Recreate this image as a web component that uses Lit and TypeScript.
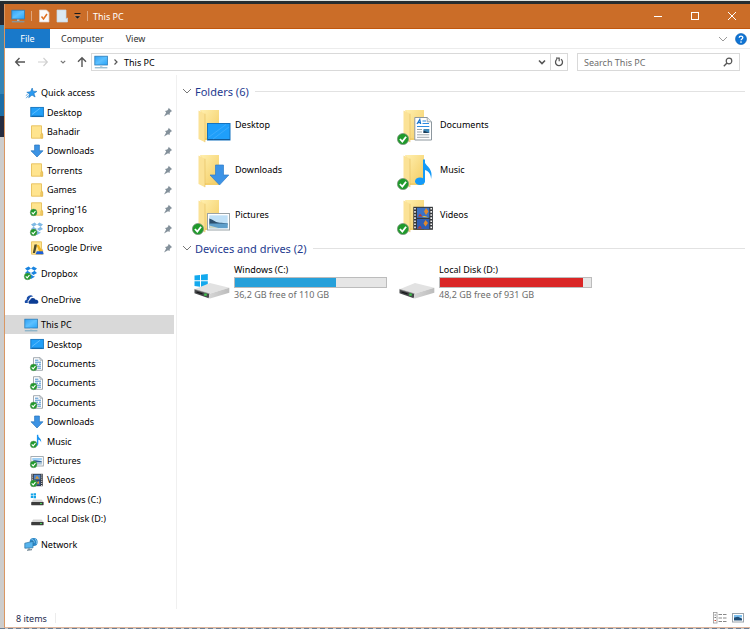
import { LitElement, html, svg, css, nothing } from "lit";
import { customElement, property } from "lit/decorators.js";

const badge = (cx: number, cy: number, r: number) => svg`
  <circle cx=${cx} cy=${cy} r=${r} fill="#1f9a2b" stroke="#7b8f7b" stroke-width=${r > 4 ? 0.7 : 0.4}></circle>
  <path d="M${cx - r * 0.55} ${cy}L${cx - r * 0.12} ${cy + r * 0.45}L${cx + r * 0.55} ${cy - r * 0.4}" fill="none" stroke="#fff" stroke-width=${r * 0.32}></path>`;

const smallBadge = badge(3.6, 10.4, 3.4);

const gradients = svg`<defs>
  <linearGradient id="sky" x1="0" y1="0" x2="1" y2="1"><stop offset="0" stop-color="#2ea0f5"/><stop offset=".5" stop-color="#5cc0ff"/><stop offset="1" stop-color="#28a4f8"/></linearGradient>
  <linearGradient id="flap" x1="0" y1="0" x2="1" y2="1"><stop offset="0" stop-color="#ffefae"/><stop offset="1" stop-color="#f3cc62"/></linearGradient>
  <linearGradient id="metal" x1="0" y1="0" x2="1" y2="0"><stop offset="0" stop-color="#d6d6d6"/><stop offset="1" stop-color="#bcbcbc"/></linearGradient>
</defs>`;

const smallFolder = svg`
  <path d="M1.5.8h10v9.700l1.200-1.300v4H1.500z" fill="#ffe48e" stroke="#e6c05a" stroke-width=".9"/>
  <path d="M10.800 13V9.300l1.600-1.100v5z" fill="#f6d06c" stroke="#dfb64c" stroke-width=".6"/>`;

const smallDrive = svg`
  <path d="M3.200 7.600h8.400l2 2.600H1.200z" fill="#d3d3d3"/>
  <rect x="1.200" y="10" width="12.400" height="3.200" rx=".4" fill="#3c3c3c"/>
  <rect x="10" y="11" width="2" height="1.100" fill="#49d35a"/>`;

const dropbox = (fill: string) => svg`
  <g fill=${fill}><path d="M1 2.600 4.600.6 7 2.600 3.400 4.800zM13 2.600 9.400.6 7 2.600l3.600 2.200zM1 7l2.400-2.200L7 7 4.600 9zM13 7l-2.400-2.200L7 7l2.400 2zM3.600 9.800l1 .5L7 8.200l2.400 2.100 1-.5v1.200L7 13l-3.400-2z"/></g>`;

const smallPage = svg`
  <path d="M3.500.7h6.600l2.400 2.400v10.200h-9z" fill="#fff" stroke="#8a949c" stroke-width=".8"/>
  <path d="M10 .7v2.500h2.500" fill="none" stroke="#8a949c" stroke-width=".7"/>
  <path d="M5 3.200h3.400M5 5.200h6M5 7.200h3M9 7.200h2M6 9.200h5M7.500 11.200h3.500" stroke="#2f7fc4" stroke-width=".9"/>`;

const monitor = svg`
  <rect x=".8" y="1.200" width="12.600" height="8.800" fill="url(#sky)" stroke="#2b7cb8" stroke-width=".8"/>
  <path d="M6 10.600h2.400v1.200H6z" fill="#b9c9d3"/><path d="M.8 12.800h12.600" stroke="#6fa5c2" stroke-width="1"/>`;

const small: Record<string, unknown> = {
  star: svg`<path d="M8.200 2 9 5.200l3.900.2-3 2 1.200 3.600-3.100-1.900-3.300 2.600.8-3.800L2.800 6.300l3.700-.6z" fill="#2b9af0" stroke="#1670bd" stroke-width=".6"/><path d="M2.200 12.200l2.300-2.800M1.800 9.600l1.800-1.200" stroke="#5fa5dc" stroke-width="1"/>`,
  desktop: svg`<rect x=".8" y="2.400" width="12.600" height="9.200" fill="#22a0f8" stroke="#1272bd" stroke-width=".9"/><path d="M2 11.200h10.400" stroke="#0f5f9f" stroke-width=".9"/><path d="M2 9.500 10 3.300" stroke="#5cbcff" stroke-width="1"/>`,
  folder: smallFolder,
  folderOk: svg`${smallFolder}${smallBadge}`,
  down: svg`<path d="M4.600 1h4.800v5.800H13L7 13 1 6.800h3.600z" fill="#3c93e4" stroke="#2574bd" stroke-width=".7"/>`,
  dropPale: svg`${dropbox("#7fb9e4")}${smallBadge}`,
  drop: svg`${dropbox("#1a84e0")}${smallBadge}`,
  gdrive: svg`${smallFolder}<path d="M4.500 3.500h2.600L5 12H2.800z" fill="#4c4a2c"/><path d="M6.500 4h2.300l4 7H9.500z" fill="#f0b420"/><path d="M6.800 10.300h6l.9 2.900H5.600z" fill="#1c5fd8"/>`,
  onedrive: svg`<path d="M1 11a2.400 2.400 0 0 1 1.600-3.200A4 4 0 0 1 9.200 4.400 4 4 0 0 0 5 7.800 2.600 2.600 0 0 0 3.800 11z" fill="#1c4fa8"/><path d="M5.300 11.800a2 2 0 0 1 .7-3.600 3 3 0 0 1 5.600-.4 2 2 0 0 1 1.300 4z" fill="#0b3c94"/>`,
  pc: monitor,
  doc: svg`${smallPage}${smallBadge}`,
  music: svg`<path d="M7.600.8v9.600" stroke="#1a94f0" stroke-width="1.400"/><path d="M7.400.8c.4 2.800 4.200 3 3.800 7.600-.5-2-1.900-2.800-3.800-3z" fill="#1a94f0"/><ellipse cx="5.800" cy="10.600" rx="2.300" ry="1.700" fill="#1a94f0"/>${smallBadge}`,
  picture: svg`<rect x=".9" y="2.600" width="12.400" height="9.400" fill="#fff" stroke="#8f9aa1" stroke-width=".8"/><path d="M2.300 4h9.600v2.400H2.300z" fill="#9fd0f5"/><path d="M3 6.800c3-1.200 6 .2 9 .6v1H3z" fill="#2d5f94"/><path d="M2.300 8.400h9.600v2.200H2.300z" fill="#a9c3d4"/>${smallBadge}`,
  video: svg`<rect x="1.400" y=".8" width="11.400" height="12.400" fill="#2e3136"/><rect x="3.800" y="1.600" width="6.600" height="5" fill="#4f86cb"/><rect x="3.800" y="7.400" width="6.600" height="5" fill="#375f9e"/><path d="M5 5.800l2-3 2.400 3zM6 10l3-2v3z" fill="#d69a36"/><path d="M2.600 1.500v11.500M11.700 1.500v11.500" stroke="#fff" stroke-width="1" stroke-dasharray="1 1.100"/>${smallBadge}`,
  driveC: svg`<path d="M.8 1.500h2.200v2H.8zM3.500 1.200h2.500v2.300H3.500zM.8 4h2.200v2H.8zM3.500 4h2.500v2.300H3.500z" fill="#14a4e8"/>${smallDrive}`,
  driveD: smallDrive,
  network: svg`<circle cx="9.600" cy="5" r="4" fill="#2a87c8"/><path d="M7.500 2.400c2 .2 3 1.600 2.600 3.400M11 2c1.400 1.200 2 3 1.400 4.800" stroke="#9fd6f2" fill="none" stroke-width=".8"/><path d="M.8 6.200 9 4.400v6.400L.8 11.200z" fill="#56b4ee" stroke="#2a709f" stroke-width=".7"/><path d="M3 13.200l5-.5M5 11.200v1.800" stroke="#55707f" stroke-width="1"/>`,
};

const bigFolder = svg`
  <path d="M8.500 2H27v30H12z" fill="#f4cf6a"/>
  <path d="M9 2h18v28H12.500z" fill="url(#flap)"/>
  <path d="M6.500 2.400 13 5.800v28.400L6.500 31z" fill="#fbe296"/>
  <path d="M13 5.800v28.400" stroke="#e2bd5c" stroke-width=".6"/>`;

const bigBadge = badge(6, 31, 5.6);

const bigDrive = svg`
  <path d="M2.500 27.300 18 21 37.300 25.800 17.500 31.800z" fill="#e2e2e2"/>
  <path d="M2.500 27.300v4l14.200 5 .8-4.500z" fill="#46484a"/>
  <path d="M17.500 31.800 37.300 25.800v5L18 36.600l-1.300-.3z" fill="url(#metal)"/>
  <path d="M2.500 27.300l15 4.500" stroke="#9a9a9a" stroke-width=".6"/>
  <path d="M4.500 30l6 1.900" stroke="#17181a" stroke-width="1.200"/>
  <rect x="12.200" y="31.500" width="2.600" height="2.300" fill="#3fc24c"/>`;

const big: Record<string, unknown> = {
  desktop: svg`${bigFolder}<rect x="15.500" y="15.500" width="22.500" height="16.500" fill="#1f9ffb" stroke="#1573c0"/><path d="M16 31.500h22" stroke="#125c9c"/><path d="M17 29 34 16.500M21 31 37 19" stroke="#4db4ff" stroke-width=".6"/>`,
  downloads: svg`${bigFolder}<path d="M23.500 12h8v10h5.300L27.500 32 18 22h5.500z" fill="#3c93e6" stroke="#2f7dc9" stroke-width=".7"/>`,
  pictures: svg`${bigFolder}<rect x="15.500" y="15.500" width="22" height="16.500" fill="#fff" stroke="#9aa3a8"/><rect x="17.300" y="17.300" width="18.400" height="12.900" fill="#bfe0f7"/><path d="M17.300 20.500c2 .5 4 1.500 6 3s6 1 12.400 2v1H17.300z" fill="#2b4f6e"/><path d="M17.300 25.500h18.400v4.700H17.300z" fill="#5f9fcb"/><path d="M17.300 27.500l10 2.700h-10z" fill="#cfd8c6"/>${bigBadge}`,
  documents: svg`${bigFolder}<path d="M17.800 9.500h12.400l4.300 4.300V32H17.800z" fill="#fff" stroke="#8d979e"/><path d="M30.200 9.500v4.300h4.300" fill="#e6ecef" stroke="#8d979e" stroke-width=".8"/><path d="M20 16l2.800-4.600.9 4.600M21 14.600h2.700" stroke="#1876cf" stroke-width="1.200" fill="none"/><path d="M25.500 13h3.500M25.500 15.500h6.500M20 18.500h12.300" stroke="#2d8be0" stroke-width="1.100"/><path d="M20 21.500h5M20 24h5M20 26.800h12.300M20 29.300h12.300" stroke="#9da7ad" stroke-width="1"/><rect x="26.500" y="21" width="5.800" height="4" fill="#3b87b8"/><path d="M26.500 25v-2.500l5.800 2.500z" fill="#1c3a55"/>${bigBadge}`,
  music: svg`${bigFolder}<ellipse cx="23" cy="28.200" rx="5" ry="3.800" fill="#149af8"/><path d="M27 6.500v21.500" stroke="#149af8" stroke-width="2"/><path d="M26.500 6.500c1.200 6.500 10.500 8.500 7.600 19.500C33.800 19.500 30.500 17.500 26.500 16.500z" fill="#149af8"/>${bigBadge}`,
  videos: svg`${bigFolder}<rect x="16.300" y="8.800" width="19.600" height="23" fill="#34373b"/><rect x="20" y="9.800" width="12.300" height="10" fill="#3c72c6"/><rect x="20" y="21" width="12.300" height="10" fill="#2f5eb4"/><path d="M29 10l2.500 3.500L29 17l-2-3.500zM28.500 22l2.500 3-2.500 3.500-2-3z" fill="#e08a2c"/><path d="M21 18.500l2-3 2.500 3zM20.500 30.500l2.500-3 2 3z" fill="#ba3b34"/><path d="M25 19c2-2 4-1 6.500.5z" fill="#e6c23e"/><path d="M18 10v21.500M34.200 10v21.500" stroke="#f2f2f2" stroke-width="1.600" stroke-dasharray="1.600 1.500"/>${bigBadge}`,
  driveC: svg`<path d="M2.500 13.600 8 12.900v5.400H2.500zM9 12.800 15.800 12v6.300H9zM2.500 19.300H8v5.500l-5.500-.7zM9 19.300h6.800v6.400L9 24.900z" fill="#12a9ee"/><g>${bigDrive}</g>`,
  driveD: bigDrive,
};

@customElement("x-icon")
export class XIcon extends LitElement {
  static styles = css`
    :host { display: block; flex: none; }
    svg { display: block; overflow: visible; }
  `;
  @property() name = "";
  @property({ type: Boolean }) large = false;
  render() {
    return this.large
      ? html`<svg width="40" height="38" viewBox="0 0 40 38" aria-hidden="true">${gradients}${big[this.name]}</svg>`
      : html`<svg width="14" height="14" viewBox="0 0 14 14" aria-hidden="true">${gradients}${small[this.name]}</svg>`;
  }
}

interface NavRow { label: string; icon: string; root?: boolean; pinned?: boolean; selected?: boolean; }

const navGroups: NavRow[][] = [
  [
    { label: "Quick access", icon: "star", root: true },
    { label: "Desktop", icon: "desktop", pinned: true },
    { label: "Bahadir", icon: "folder", pinned: true },
    { label: "Downloads", icon: "down", pinned: true },
    { label: "Torrents", icon: "folder", pinned: true },
    { label: "Games", icon: "folder", pinned: true },
    { label: "Spring'16", icon: "folderOk", pinned: true },
    { label: "Dropbox", icon: "dropPale", pinned: true },
    { label: "Google Drive", icon: "gdrive", pinned: true },
  ],
  [{ label: "Dropbox", icon: "drop", root: true }],
  [{ label: "OneDrive", icon: "onedrive", root: true }],
  [
    { label: "This PC", icon: "pc", root: true, selected: true },
    { label: "Desktop", icon: "desktop" },
    { label: "Documents", icon: "doc" },
    { label: "Documents", icon: "doc" },
    { label: "Documents", icon: "doc" },
    { label: "Downloads", icon: "down" },
    { label: "Music", icon: "music" },
    { label: "Pictures", icon: "picture" },
    { label: "Videos", icon: "video" },
    { label: "Windows (C:)", icon: "driveC" },
    { label: "Local Disk (D:)", icon: "driveD" },
  ],
  [{ label: "Network", icon: "network", root: true }],
];

const folders = [
  ["Desktop", "desktop"], ["Documents", "documents"],
  ["Downloads", "downloads"], ["Music", "music"],
  ["Pictures", "pictures"], ["Videos", "videos"],
];

const drives = [
  { label: "Windows (C:)", icon: "driveC", used: 67, free: "36,2 GB free of 110 GB", full: false },
  { label: "Local Disk (D:)", icon: "driveD", used: 95, free: "48,2 GB free of 931 GB", full: true },
];

const chevron = html`<svg width="10" height="10" viewBox="0 0 10 10" aria-hidden="true"><path d="M1 3l4 4 4-4" fill="none" stroke="currentColor"/></svg>`;
const boldChevron = html`<svg width="8" height="8" viewBox="0 0 8 8" aria-hidden="true"><path d="M1 2.500l3 3 3-3" fill="none" stroke="currentColor" stroke-width="1.600"/></svg>`;
const pin = html`<svg class="pin" width="10" height="10" viewBox="0 0 10 10" role="img" aria-label="Pinned"><path d="M5.600.8 9.200 4.200 8 4.600 6.800 6l-.2 2L5 7.200 1 9.400l2.200-4L2 4l2.200-.4L5.400 2z" fill="#84919b"/></svg>`;

@customElement("app-root")
export class AppRoot extends LitElement {
  static styles = css`
    :host {
      display: block;
      font: 9px/13px "Noto Sans", "Open Sans", sans-serif;
      color: #000;
    }
    * { box-sizing: border-box; }
    button { font: inherit; color: inherit; background: none; border: 0; padding: 0; margin: 0; display: flex; align-items: center; justify-content: center; }
    a { color: inherit; text-decoration: none; }
    ul, h1, h2, p { margin: 0; padding: 0; font: inherit; list-style: none; }
    svg { display: block; flex: none; }

    .backdrop {
      min-height: 100vh;
      padding: 4px 0 1px 4px;
      display: flex;
      background:
        linear-gradient(#dfe5e3 0 1px, #262d30 1px) top / 100% 4px no-repeat,
        repeating-linear-gradient(90deg, #6c7f95 0 5px, #c9cdd0 5px 8px) bottom / 100% 1px no-repeat,
        linear-gradient(#29282e 0 25px, #3584b5 25px 94px, #1d6da5 94px 116px, #262c40 116px 137px, #cdcdcd 137px);
    }
    .window {
      flex: 1;
      min-width: 0;
      display: flex;
      flex-direction: column;
      background: #fff;
      border-left: 1px solid #d99763;
      border-bottom: 1px solid #dfb59b;
    }

    .titlebar { display: flex; height: 25px; align-items: center; background: #cb6d28; border-bottom: 1px solid #c0560d; color: #fff; padding: 0 0 0 6px; }
    .quick { display: flex; align-items: center; gap: 6px; }
    .sep { width: 1px; height: 10px; background: #e0a67c; }
    .title { margin-left: 5px; flex: 1; }
    .caption { width: 37px; height: 24px; }

    .tabs { display: flex; height: 20px; border-bottom: 1px solid #ececec; color: #333; }
    .tab { padding: 0 11px; }
    .file { background: #1979ca; color: #fff; padding: 0; width: 45px; }
    .tools { margin-left: auto; display: flex; align-items: center; gap: 7px; padding-right: 3px; color: #999; }

    .navbar { display: flex; align-items: center; height: 26px; padding: 0 10px 0 9px; color: #555; gap: 9px; }
    .history { display: flex; align-items: center; gap: 11px; }
    .address { display: flex; flex: 1; height: 18px; border: 1px solid #d9d9d9; align-items: stretch; margin-left: -5px; }
    .crumbs { display: flex; flex: 1; align-items: center; gap: 5px; padding-left: 2px; }
    .crumb { color: #000; }
    .drop { width: 16px; }
    .refresh { width: 17px; border-left: 1px solid #d9d9d9; }
    .search { display: flex; width: 163px; height: 18px; border: 1px solid #d9d9d9; align-items: center; padding: 0 6px; }
    .search input { flex: 1; min-width: 0; border: 0; padding: 0; outline: 0; background: none; font: inherit; color: #000; }
    .search input::placeholder { color: #6d6d6d; opacity: 1; }

    .body { display: flex; flex: 1; }
    .sidebar { width: 172px; border-right: 1px solid #f0f0f0; padding: 8px 2px 0 0; }
    .group + .group { margin-top: 6px; }
    .row { display: flex; align-items: center; height: 19px; padding: 0 1px 0 25px; gap: 3px; }
    .group li:nth-child(5n + 2) .row, .group li:nth-child(5n) .row, .group li:only-child .row { height: 20px; }
    .root { padding-left: 19px; }
    .selected { background: #d9d9d9; }
    .pin { margin-left: auto; }

    .content { flex: 1; min-width: 0; padding: 5px 0 0 5px; }
    .heading { display: flex; align-items: center; height: 22px; gap: 3px; font-size: 11px; color: #1e3a8f; }
    .heading svg { color: #777; }
    .rule { flex: 1; height: 1px; background: #e2e2e2; margin: 0 5px 0 3px; }
    .tiles { display: grid; grid-template-columns: repeat(auto-fill, 205px); padding-left: 10px; }
    .tile { display: flex; height: 45px; align-items: center; gap: 3px; }
    .tile x-icon { padding-top: 4px; }
    .drive { display: flex; gap: 2px; padding-top: 3px; }
    .info { width: 153px; padding-top: 1px; }
    .bar { height: 11px; margin-top: 1px; border: 1px solid #bcbcbc; background: #e6e6e6; }
    .fill { height: 100%; background: #26a0da; }
    .full { background: #da2626; }
    .free { color: #6d6d6d; }

    .status { display: flex; height: 18px; align-items: center; padding: 0 5px 0 11px; color: #1e2b50; gap: 8px; }
    .status .sep { background: #ececec; }
    .views { margin-left: auto; display: flex; gap: 4px; }
  `;

  private row(r: NavRow) {
    return html`<li><a href="#" class="row ${r.root ? "root" : ""} ${r.selected ? "selected" : ""}" aria-current=${r.selected ? "page" : nothing}>
      <x-icon name=${r.icon}></x-icon><span>${r.label}</span>${r.pinned ? pin : nothing}</a></li>`;
  }

  render() {
    return html`<div class="backdrop"><div class="window">
      <header class="titlebar">
        <div class="quick">
          <x-icon name="pc"></x-icon>
          <span class="sep"></span>
          <button aria-label="Properties"><svg width="12" height="14" viewBox="0 0 12 14"><path d="M1.500 1h7l2.500 2.500V13H1.500z" fill="#fbfbfb" stroke="#ddd0c8" stroke-width=".7"/><path d="M3.500 7.500l2 2.500 3.500-5" fill="none" stroke="#e07122" stroke-width="1.500"/></svg></button>
          <button aria-label="New folder"><svg width="12" height="14" viewBox="0 0 12 14"><path d="M1 1h9v9l1.500-1v4H1z" fill="#dbe9f2" stroke="#c5d9e6" stroke-width=".7"/></svg></button>
          <button aria-label="Customize toolbar"><svg width="7" height="8" viewBox="0 0 7 8"><path d="M.5 1.500h6" stroke="#1b1b1b"/><path d="M.5 4h6l-3 3z" fill="#111" stroke="#f6d9c4" stroke-width=".3"/></svg></button>
          <span class="sep"></span>
        </div>
        <h1 class="title">This PC</h1>
        <button class="caption" aria-label="Minimize"><svg width="10" height="10" viewBox="0 0 10 10"><path d="M1 5.500h8" stroke="#fff"/></svg></button>
        <button class="caption" aria-label="Maximize"><svg width="10" height="10" viewBox="0 0 10 10"><rect x="1.500" y="1.500" width="7" height="7" fill="none" stroke="#fff"/></svg></button>
        <button class="caption" aria-label="Close"><svg width="10" height="10" viewBox="0 0 10 10"><path d="M1 1l8 8M9 1L1 9" stroke="#fff"/></svg></button>
      </header>

      <nav class="tabs" aria-label="Ribbon">
        <button class="tab file">File</button>
        <button class="tab">Computer</button>
        <button class="tab">View</button>
        <div class="tools">
          <button aria-label="Expand ribbon">${chevron}</button>
          <button aria-label="Help"><svg width="12" height="12" viewBox="0 0 12 12"><circle cx="6" cy="6" r="5.500" fill="#0f74d4" stroke="#0a5cae" stroke-width=".6"/><path d="M4.200 4.700c0-2.200 3.600-2.200 3.600-.1C7.800 6 6 5.900 6 7.300" fill="none" stroke="#fff" stroke-width="1.300"/><circle cx="6" cy="9.100" r=".8" fill="#fff"/></svg></button>
        </div>
      </nav>

      <div class="navbar">
        <div class="history">
          <button aria-label="Back"><svg width="12" height="12" viewBox="0 0 12 12"><path d="M11 6H2M5.500 2 1.700 6l3.800 4" fill="none" stroke="#555" stroke-width="1.400"/></svg></button>
          <button aria-label="Forward"><svg width="12" height="12" viewBox="0 0 12 12"><path d="M1 6h9M6.500 2l3.800 4-3.800 4" fill="none" stroke="#d0d0d0" stroke-width="1.200"/></svg></button>
          <button aria-label="Recent locations"><svg width="6" height="8" viewBox="0 0 6 8"><path d="M.8 2.800 3 5l2.200-2.200" fill="none" stroke="#777" stroke-width="1.200"/></svg></button>
          <button aria-label="Up"><svg width="10" height="12" viewBox="0 0 10 12"><path d="M5 11V2M1 5.700l4-4 4 4" fill="none" stroke="#555" stroke-width="1.400"/></svg></button>
        </div>
        <div class="address">
          <div class="crumbs">
            <x-icon name="pc"></x-icon>
            <svg width="6" height="8" viewBox="0 0 6 8" aria-hidden="true"><path d="M1.500 1.500 4 4 1.500 6.500" fill="none" stroke="#555" stroke-width="1.200"/></svg>
            <button class="crumb">This PC</button>
          </div>
          <button class="drop" aria-label="Previous locations">${boldChevron}</button>
          <button class="refresh" aria-label="Refresh"><svg width="10" height="10" viewBox="0 0 10 10"><path d="M3 2.300A3.500 3.500 0 1 0 7 2.300" fill="none" stroke="#555" stroke-width="1.300"/><path d="M2 1.200h3.200v3" fill="none" stroke="#555" stroke-width="1.200"/></svg></button>
        </div>
        <label class="search">
          <input type="search" placeholder="Search This PC" aria-label="Search This PC" />
          <svg width="10" height="10" viewBox="0 0 10 10" aria-hidden="true"><circle cx="6" cy="4" r="2.800" fill="none" stroke="#555" stroke-width="1.200"/><path d="M4 6 .8 9.200" stroke="#555" stroke-width="1.400"/></svg>
        </label>
      </div>

      <div class="body">
        <nav class="sidebar" aria-label="Locations">
          ${navGroups.map((g) => html`<ul class="group">${g.map((r) => this.row(r))}</ul>`)}
        </nav>
        <main class="content">
          <h2 class="heading">${chevron}<span>Folders (6)</span><span class="rule"></span></h2>
          <div class="tiles">
            ${folders.map(([label, icon]) => html`<a href="#" class="tile"><x-icon large name=${icon}></x-icon><span>${label}</span></a>`)}
          </div>
          <h2 class="heading">${chevron}<span>Devices and drives (2)</span><span class="rule"></span></h2>
          <div class="tiles">
            ${drives.map((d) => html`<a href="#" class="drive"><x-icon large name=${d.icon}></x-icon>
              <div class="info"><p>${d.label}</p>
                <div class="bar" role="meter" aria-label="Used space" aria-valuemin="0" aria-valuemax="100" aria-valuenow=${d.used}><div class="fill ${d.full ? "full" : ""}" style="width:${d.used}%"></div></div>
                <p class="free">${d.free}</p></div></a>`)}
          </div>
        </main>
      </div>

      <footer class="status">
        <span>8 items</span><span class="sep"></span>
        <div class="views">
          <button aria-label="Details view"><svg width="14" height="12" viewBox="0 0 14 12"><rect x=".5" y=".5" width="3.500" height="10.500" fill="#fff" stroke="#999" stroke-width=".8"/><path d="M1.500 3h1.500M1.500 5.500h1.500" stroke="#777"/><path d="M1.500 8.500h1.500" stroke="#d8492c"/><path d="M5.500 2.500h3.500M10 2.500h3.500M5.500 6h3.500M10 6h3.500M5.500 9.500h3.500M10 9.500h3.500" stroke="#888"/></svg></button>
          <button aria-label="Large icons view"><svg width="14" height="12" viewBox="0 0 14 12"><rect x="1.500" y="1.500" width="11" height="8.500" fill="#fff" stroke="#9aa4ac"/><path d="M3 3h8v2.500H3z" fill="#7cc0f0"/><path d="M3 5.500l4-.8 4 1.800v2H3z" fill="#1f4e78"/></svg></button>
        </div>
      </footer>
    </div></div>`;
  }
}
